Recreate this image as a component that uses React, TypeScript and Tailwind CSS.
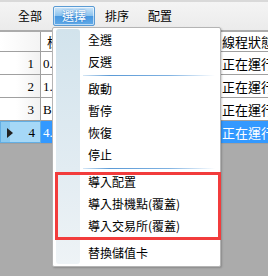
import React from "react";

const ROWS = [
  { no: "1", name: "0.", status: "正在運行" },
  { no: "2", name: "1.", status: "正在運行" },
  { no: "3", name: "B.", status: "正在運行" },
  { no: "4", name: "4.", status: "正在運行", selected: true },
];

type Entry = { label: string } | { sep: true };

const MENU: Entry[] = [
  { label: "全選" },
  { label: "反選" },
  { sep: true },
  { label: "啟動" },
  { label: "暫停" },
  { label: "恢復" },
  { label: "停止" },
  { sep: true },
  { label: "導入配置" },
  { label: "導入掛機點(覆蓋)" },
  { label: "導入交易所(覆蓋)" },
  { sep: true },
  { label: "替換儲值卡" },
];

function MenuBar() {
  return (
    <div className="flex h-[30px] items-center gap-px border-t-2 border-[#d9d9d9] bg-[linear-gradient(to_bottom,#f4f4f4,#ebebeb)] pl-[8px] text-[12px] text-black">
      <div className="flex w-[44px] justify-center">全部</div>
      <div className="flex h-[20px] w-[42px] items-center justify-center rounded-[2px] border border-[#5a9bd4] bg-[linear-gradient(to_bottom,#cfe6f8,#8cc3ee_48%,#4797e0_52%,#63abe8)] text-white shadow-[inset_0_0_0_1px_rgba(255,255,255,0.6)] [text-shadow:0_0_2px_#1f6fc0]">
        選擇
      </div>
      <div className="flex w-[42px] justify-center">排序</div>
      <div className="flex w-[42px] justify-center">配置</div>
    </div>
  );
}

function Grid() {
  return (
    <div className="mt-[2px] text-[13px] leading-none">
      <div className="flex h-[20px] border-b border-[#a0a0a0] bg-white">
        <div className="w-[41px] border-r border-[#a0a0a0] bg-[linear-gradient(to_right,#ffffff,#f4f4f4)]" />
        <div className="flex w-[180px] items-center border-r border-[#a0a0a0] pl-[6px]">標識</div>
        <div className="flex flex-1 items-center overflow-hidden whitespace-nowrap pl-px">線程狀態</div>
      </div>
      {ROWS.map((r) => (
        <div key={r.no} className="flex h-[23px] border-b border-[#a0a0a0] bg-white">
          {r.selected ? (
            <div className="relative flex w-[41px] items-center justify-end border border-[#63aee3] bg-[linear-gradient(to_right,#8ccaf0_0%,#8ccaf0_22%,#a6d8f7_24%,#a6d8f7)] pr-[5px] font-['Liberation_Serif',serif]">
              <span className="absolute left-[6px] top-[6px] h-0 w-0 border-y-[5px] border-l-[6px] border-y-transparent border-l-[#222]" />
              {r.no}
            </div>
          ) : (
            <div className="flex w-[41px] items-center justify-end border-r border-[#a0a0a0] bg-[linear-gradient(to_right,#ffffff_40%,#f1f1f1)] pr-[6px] font-['Liberation_Serif',serif]">
              {r.no}
            </div>
          )}
          <div
            className={`flex w-[180px] items-center border-r border-[#a0a0a0] pl-[2px] font-['Liberation_Serif',serif] ${
              r.selected ? "bg-[#3399ff] text-white" : ""
            }`}
          >
            {r.name}
          </div>
          <div
            className={`flex flex-1 items-center overflow-hidden whitespace-nowrap pl-px ${
              r.selected ? "bg-[#3399ff] text-white" : ""
            }`}
          >
            {r.status}
          </div>
        </div>
      ))}
    </div>
  );
}

function Dropdown() {
  return (
    <div className="absolute left-[52px] top-[27px] flex h-[240px] w-[169px] rounded-[2px] border border-[#b4b4b4] bg-white shadow-[1px_1px_2px_rgba(0,0,0,0.2)]">
      <div className="ml-[3px] mt-px mb-[2px] w-[24px] rounded-[3px] bg-[linear-gradient(to_bottom,#d2e3ec,#e2ecf2_60%,#eef3f6)]" />
      <div className="flex flex-1 flex-col pt-px text-[12px] leading-none">
        {MENU.map((e, i) =>
          "sep" in e ? (
            <div key={i} className="flex h-[5px] items-center pl-[3px] pr-[5px]">
              <div className="h-px w-full bg-[linear-gradient(to_right,#d6e7f5,#5b9ad6_20%,#7fb2e2_65%,#ffffff)]" />
            </div>
          ) : (
            <div key={i} className="flex h-[22px] items-center whitespace-nowrap pl-[8px] text-black">
              {e.label}
            </div>
          )
        )}
      </div>
    </div>
  );
}

export default function App() {
  return (
    <div className="relative h-[276px] w-[268px] overflow-hidden bg-[#ababab] font-['Noto_Sans_CJK_TC','Noto_Sans',sans-serif]">
      <MenuBar />
      <Grid />
      <Dropdown />
      {/* annotation box */}
      <div className="absolute left-[55px] top-[172px] h-[68px] w-[166px] border-[3px] border-[#f23c3c]" />
    </div>
  );
}
